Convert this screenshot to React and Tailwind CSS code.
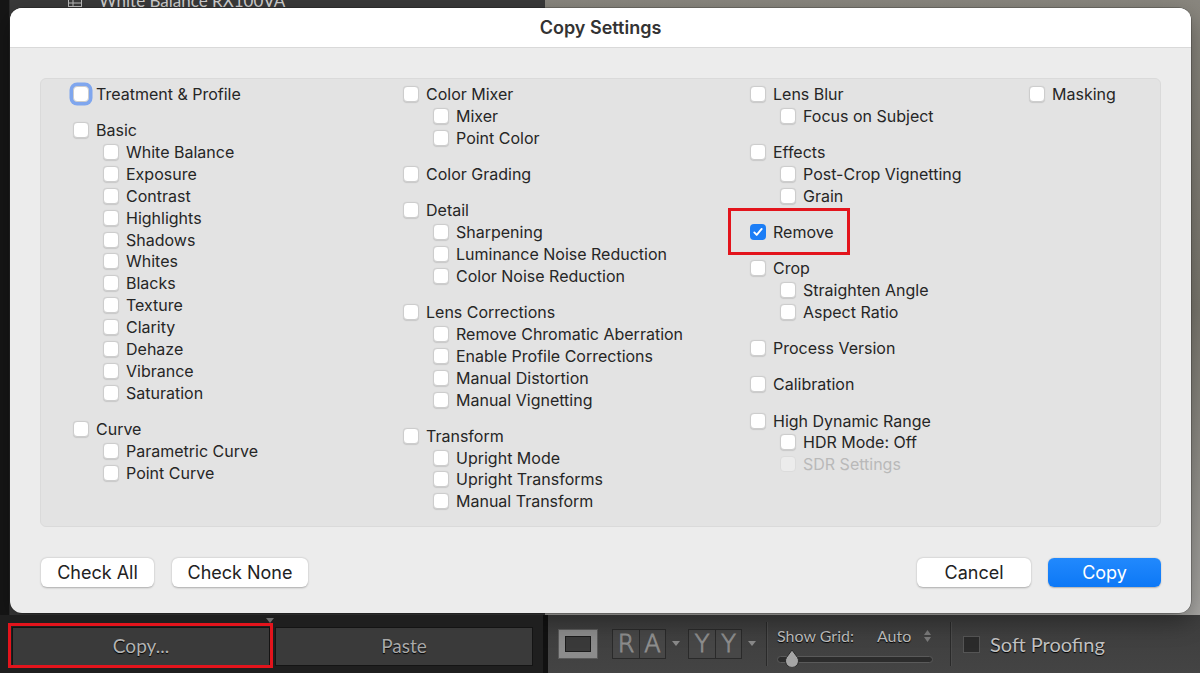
import React from 'react';

const columns = [
  [
    { label: 'Treatment & Profile', focus: true },
    {
      label: 'Basic',
      subs: ['White Balance', 'Exposure', 'Contrast', 'Highlights', 'Shadows', 'Whites', 'Blacks', 'Texture', 'Clarity', 'Dehaze', 'Vibrance', 'Saturation'],
    },
    { label: 'Curve', subs: ['Parametric Curve', 'Point Curve'] },
  ],
  [
    { label: 'Color Mixer', subs: ['Mixer', 'Point Color'] },
    { label: 'Color Grading' },
    { label: 'Detail', subs: ['Sharpening', 'Luminance Noise Reduction', 'Color Noise Reduction'] },
    { label: 'Lens Corrections', subs: ['Remove Chromatic Aberration', 'Enable Profile Corrections', 'Manual Distortion', 'Manual Vignetting'] },
    { label: 'Transform', subs: ['Upright Mode', 'Upright Transforms', 'Manual Transform'] },
  ],
  [
    { label: 'Lens Blur', subs: ['Focus on Subject'] },
    { label: 'Effects', subs: ['Post-Crop Vignetting', 'Grain'] },
    { label: 'Remove', checked: true, marked: true },
    { label: 'Crop', subs: ['Straighten Angle', 'Aspect Ratio'] },
    { label: 'Process Version' },
    { label: 'Calibration' },
    { label: 'High Dynamic Range', subs: ['HDR Mode: Off', { label: 'SDR Settings', disabled: true }] },
  ],
  [{ label: 'Masking' }],
];

const Checkbox = ({ checked, focus, disabled }) => {
  if (checked) {
    return (
      <span className="w-4 h-4 rounded-[4px] bg-[#1c7ef6] flex items-center justify-center shrink-0">
        <svg width="12" height="12" viewBox="0 0 12 12" fill="none">
          <path d="M2.3 6.4l2.4 2.5 5-6" stroke="#fff" strokeWidth="1.9" strokeLinecap="round" strokeLinejoin="round" />
        </svg>
      </span>
    );
  }
  return (
    <span
      className={`w-4 h-4 rounded-[4px] shrink-0 border ${
        disabled ? 'bg-[#ececec] border-[#dcdcdc]' : 'bg-white border-[#cdcdcd] shadow-[0_0.5px_1px_rgba(0,0,0,0.12)]'
      } ${focus ? 'ring-[3.5px] ring-[#7fa6ee] border-[#7fa6ee]' : ''}`}
    />
  );
};

const Row = ({ label, checked, focus, disabled, marked }) => (
  <div className="relative h-[21.9px] flex items-center gap-[7px]">
    <Checkbox checked={checked} focus={focus} disabled={disabled} />
    <span className={`text-[16px] leading-none whitespace-nowrap ${disabled ? 'text-[#b9b9b9]' : 'text-[#262626]'}`}>{label}</span>
    {marked && <div className="absolute left-[-22px] top-[-13px] w-[122px] h-[47px] border-[3px] border-[#e3141c]" />}
  </div>
);

const Column = ({ groups }) => (
  <div className="flex flex-col gap-[14.3px]">
    {groups.map((g) => (
      <div key={g.label} className="flex flex-col">
        <Row {...g} />
        {g.subs && (
          <div className="flex flex-col pl-[30px]">
            {g.subs.map((s) => {
              const item = typeof s === 'string' ? { label: s } : s;
              return <Row key={item.label} {...item} />;
            })}
          </div>
        )}
      </div>
    ))}
  </div>
);

const MacButton = ({ children, primary, width }) => (
  <button
    className={`${width} h-[29px] rounded-[6px] text-[18px] leading-none flex items-center justify-center ${
      primary
        ? 'bg-gradient-to-b from-[#2189fd] to-[#0c78f6] text-white shadow-[0_0.5px_1.5px_rgba(0,0,0,0.25)]'
        : 'bg-white text-[#222] shadow-[0_0.5px_2px_rgba(0,0,0,0.28)]'
    }`}
  >
    {children}
  </button>
);

const Caret = () => (
  <svg width="8" height="6" viewBox="0 0 8 6">
    <path d="M0 0h8L4 5z" fill="#8a8a8a" />
  </svg>
);

const Sep = ({ cls }) => <div className={`w-[2px] h-[44px] border-l border-[#2a2a2a] bg-[#4c4c4c] ${cls}`} />;

const LetterBox = ({ letters }) => (
  <div className="h-[30px] flex border border-[#2a2a2a] bg-[#474747]">
    {letters.map((l, i) => (
      <span
        key={i}
        className={`w-[26px] flex items-center justify-center text-[24px] leading-none text-transparent [-webkit-text-stroke:1px_#8e8e8e] ${
          i > 0 ? 'border-l border-[#2a2a2a]' : ''
        }`}
        style={{ fontFamily: '"DejaVu Sans", sans-serif', fontWeight: 300 }}
      >
        {l}
      </span>
    ))}
  </div>
);

export default function App() {
  return (
    <div className="w-[1200px] h-[673px] overflow-hidden flex flex-col bg-[#141414]" style={{ fontFamily: 'Inter, "Noto Sans", sans-serif' }}>
      <div className="relative h-[615px] flex">
        <div className="w-[10px] bg-[#161616] border-r border-[#2c2c2c]" />
        <div className="w-[535px] bg-[#3a3a3a] flex flex-col">
          <div className="h-[8px] overflow-visible flex items-start gap-[17px] pl-[58px] -mt-[9px]">
            <svg width="14" height="12" viewBox="0 0 14 12" className="mt-[4px]">
              <rect x="0.5" y="0.5" width="13" height="11" fill="none" stroke="#bdbdbd" />
              <path d="M0.5 4.5h13M0.5 8h13M5 4.5v7" stroke="#bdbdbd" />
            </svg>
            <span className="text-[17px] text-[#cfcfcf] leading-[20px]" style={{ fontFamily: 'Lato, sans-serif' }}>
              White Balance RX100VA
            </span>
          </div>
        </div>
        <div className="flex-1 bg-gradient-to-b from-[#8a877f] via-[#7b786f] to-[#a8a7a4]" />

        <div className="absolute left-[10px] top-[8px] w-[1181px] h-[605px] rounded-[12px] overflow-hidden flex flex-col bg-[#ececec] shadow-[0_0_0_0.5px_rgba(0,0,0,0.4),0_8px_24px_rgba(0,0,0,0.35)]">
          <div className="h-[40px] shrink-0 bg-white border-b border-[#d9d9d9] flex items-center justify-center">
            <span className="text-[18px] font-semibold text-[#333]">Copy Settings</span>
          </div>
          <div className="flex-1 flex flex-col px-[30px] pt-[30px] pb-[26px]">
            <div className="h-[449px] rounded-[6px] bg-[#e3e3e3] border border-[#dadada] pl-[32px] pt-[4px] grid grid-cols-[330px_347px_279px_1fr]">
              {columns.map((groups, i) => (
                <Column key={i} groups={groups} />
              ))}
            </div>
            <div className="mt-[31px] flex items-center">
              <div className="flex gap-[18px] ml-[1px]">
                <MacButton width="w-[113px]">Check All</MacButton>
                <MacButton width="w-[136px]">Check None</MacButton>
              </div>
              <div className="ml-auto flex gap-[17px]">
                <MacButton width="w-[114px]">Cancel</MacButton>
                <MacButton width="w-[113px]" primary>
                  Copy
                </MacButton>
              </div>
            </div>
          </div>
        </div>
      </div>

      <div className="flex-1 flex" style={{ fontFamily: 'Lato, "Noto Sans", sans-serif' }}>
        <div className="relative w-[543px] bg-[#1f1f1f] flex gap-[5px] pl-[12px] pr-[10px] pt-[12px] pb-[7px]">
          <svg width="8" height="5" viewBox="0 0 8 5" className="absolute left-[266px] top-[3px]">
            <path d="M0 0h8L4 5z" fill="#6e6e6e" />
          </svg>
          <div className="relative w-[258px]">
            <button className="w-full h-full bg-[#3a3a3a] border border-[#141414] text-[19px] text-[#b3b3b3] [text-shadow:0_1px_1px_#000]">
              Copy...
            </button>
            <div className="absolute left-[-4px] top-[-4px] w-[265px] h-[45px] border-[3px] border-[#e3141c]" />
          </div>
          <button className="flex-1 bg-[#3a3a3a] border border-[#141414] text-[19px] text-[#a9a9a9] [text-shadow:0_1px_1px_#000]">
            Paste
          </button>
        </div>
        <div className="w-[5px] bg-[#111]" />
        <div className="flex-1 bg-gradient-to-b from-[#3d3d3d] to-[#444] flex items-center pl-[10px]">
          <div className="w-[40px] h-[30px] bg-[#8c8c8c] border border-[#5a5a5a] flex items-center justify-center">
            <div className="w-[26px] h-[16px] bg-[#3a3a3a] border border-[#1c1c1c]" />
          </div>
          <div className="ml-[14px]">
            <LetterBox letters={['R', 'A']} />
          </div>
          <div className="ml-[6px] mr-[8px]">
            <Caret />
          </div>
          <LetterBox letters={['Y', 'Y']} />
          <div className="ml-[6px]">
            <Caret />
          </div>
          <Sep cls="ml-[10px] mr-[9px]" />
          <div className="flex flex-col w-[160px] pt-[2px]">
            <div className="flex items-center text-[16px] text-[#bdbdbd] [text-shadow:0_1px_1px_#000] leading-none">
              <span>Show Grid:</span>
              <span className="ml-[23px]">Auto</span>
              <svg width="7" height="12" viewBox="0 0 7 12" className="ml-[13px]">
                <path d="M0 5h7L3.5 0zM0 7h7L3.5 12z" fill="#7a7a7a" />
              </svg>
            </div>
            <div className="relative mt-[12px] w-[156px] h-[7px] rounded-full bg-[#2c2c2c] border border-[#5a5a5a]">
              <svg width="16" height="18" viewBox="0 0 16 18" className="absolute left-[6px] top-[-8px]">
                <path d="M8 1 L13.5 8.5 A6.5 6.5 0 1 1 2.5 8.5 Z" fill="#a5a5a5" stroke="#2a2a2a" strokeWidth="1" />
              </svg>
            </div>
          </div>
          <Sep cls="ml-[13px] mr-[11px]" />
          <div className="w-[17px] h-[17px] bg-[#2b2b2b] border border-[#555]" />
          <span className="ml-[10px] text-[20px] text-[#c2c2c2] [text-shadow:0_1px_1px_#000]">Soft Proofing</span>
        </div>
      </div>
    </div>
  );
}
